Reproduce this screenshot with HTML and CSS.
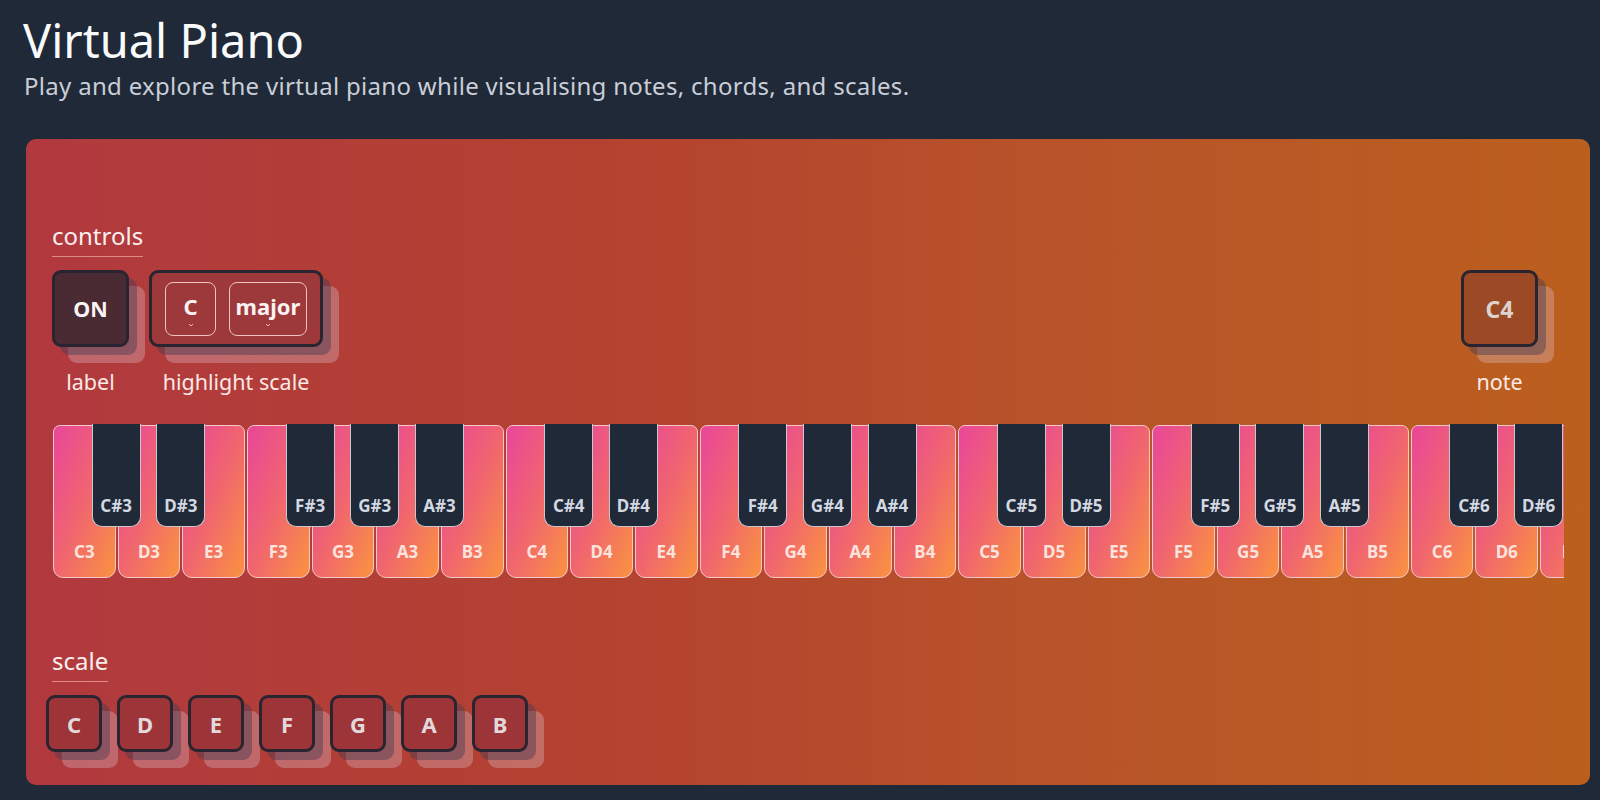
FILE: index.html
```html
<!DOCTYPE html>
<html lang="en">
<head>
<meta charset="utf-8">
<title>Virtual Piano</title>
<link rel="stylesheet" href="styles.css">
</head>
<body>
<header class="page-head">
  <h1 class="title">Virtual Piano</h1>
  <p class="subtitle">Play and explore the virtual piano while visualising notes, chords, and scales.</p>
</header>
<main class="card">
  <section class="controls">
    <h2 class="section-label">controls</h2>
    <div class="controls-row">
      <div class="control-group">
        <div class="control">
          <button class="tile tile-on">ON</button>
          <span class="caption">label</span>
        </div>
        <div class="control">
          <div class="tile tile-group">
            <div class="select select-key">C<svg class="chev" viewBox="0 0 6 4" width="6" height="4"><path d="M1 1 L3 3 L5 1" fill="none" stroke="#f3b7b7" stroke-width="1"/></svg></div>
            <div class="select select-mode">major<svg class="chev" viewBox="0 0 6 4" width="6" height="4"><path d="M1 1 L3 3 L5 1" fill="none" stroke="#f3b7b7" stroke-width="1"/></svg></div>
          </div>
          <span class="caption">highlight scale</span>
        </div>
      </div>
      <div class="control">
        <button class="tile tile-note">C4</button>
        <span class="caption">note</span>
      </div>
    </div>
  </section>

  <div class="piano">
    <div class="white"><span class="wl">C3</span><div class="black"><span>C#3</span></div></div>
    <div class="white"><span class="wl">D3</span><div class="black"><span>D#3</span></div></div>
    <div class="white"><span class="wl">E3</span></div>
    <div class="white"><span class="wl">F3</span><div class="black"><span>F#3</span></div></div>
    <div class="white"><span class="wl">G3</span><div class="black"><span>G#3</span></div></div>
    <div class="white"><span class="wl">A3</span><div class="black"><span>A#3</span></div></div>
    <div class="white"><span class="wl">B3</span></div>
    <div class="white"><span class="wl">C4</span><div class="black"><span>C#4</span></div></div>
    <div class="white"><span class="wl">D4</span><div class="black"><span>D#4</span></div></div>
    <div class="white"><span class="wl">E4</span></div>
    <div class="white"><span class="wl">F4</span><div class="black"><span>F#4</span></div></div>
    <div class="white"><span class="wl">G4</span><div class="black"><span>G#4</span></div></div>
    <div class="white"><span class="wl">A4</span><div class="black"><span>A#4</span></div></div>
    <div class="white"><span class="wl">B4</span></div>
    <div class="white"><span class="wl">C5</span><div class="black"><span>C#5</span></div></div>
    <div class="white"><span class="wl">D5</span><div class="black"><span>D#5</span></div></div>
    <div class="white"><span class="wl">E5</span></div>
    <div class="white"><span class="wl">F5</span><div class="black"><span>F#5</span></div></div>
    <div class="white"><span class="wl">G5</span><div class="black"><span>G#5</span></div></div>
    <div class="white"><span class="wl">A5</span><div class="black"><span>A#5</span></div></div>
    <div class="white"><span class="wl">B5</span></div>
    <div class="white"><span class="wl">C6</span><div class="black"><span>C#6</span></div></div>
    <div class="white"><span class="wl">D6</span><div class="black"><span>D#6</span></div></div>
    <div class="white"><span class="wl">E6</span></div>
  </div>

  <section class="scale">
    <h2 class="section-label">scale</h2>
    <div class="scale-row">
      <button class="tile tile-scale">C</button>
      <button class="tile tile-scale">D</button>
      <button class="tile tile-scale">E</button>
      <button class="tile tile-scale">F</button>
      <button class="tile tile-scale">G</button>
      <button class="tile tile-scale">A</button>
      <button class="tile tile-scale">B</button>
    </div>
  </section>
</main>
</body>
</html>
```
FILE: styles.css
```css
* { box-sizing: border-box; }
html, body { margin: 0; padding: 0; }
body {
  background: #1f2937;
  width: 1600px;
  height: 800px;
  overflow: hidden;
  font-family: "Noto Sans", "Open Sans", sans-serif;
  color: #f3f4f6;
  padding: 0 10px 0 26px;
}
.page-head { padding-top: 10px; }
.title {
  margin: 0;
  font-size: 47px;
  font-weight: 400;
  line-height: 60px;
  margin-left: -3px;
  color: #f9fafb;
}
.subtitle {
  margin: 0;
  font-size: 24px;
  line-height: 32px;
  margin-left: -2px;
  color: #c9ced8;
  letter-spacing: 0.3px;
}
.card {
  margin-top: 37px;
  height: 646px;
  border-radius: 10px;
  background: linear-gradient(90deg, #b1393f 0%, #b4432f 40%, #b8532a 65%, #bb5f1e 100%);
  padding: 83px 26px 0 26px;
}
.section-label {
  display: inline-block;
  margin: 0;
  font-size: 24px;
  font-weight: 400;
  line-height: 28px;
  padding-bottom: 6px;
  border-bottom: 1px solid rgba(255, 205, 200, 0.55);
  color: #fbeeee;
}
.controls-row {
  display: flex;
  justify-content: space-between;
  margin-top: 13px;
  padding-right: 26px;
}
.control-group { display: flex; gap: 20px; }
.control {
  display: flex;
  flex-direction: column;
  align-items: center;
}
.caption {
  margin-top: 22px;
  font-size: 21.5px;
  line-height: 26px;
  color: #fbe9e6;
}
.tile {
  font-family: inherit;
  border: 3px solid #2a2430;
  border-radius: 9px;
  font-weight: 700;
  color: #f4eeee;
  display: flex;
  align-items: center;
  justify-content: center;
  padding: 0;
  box-shadow: 8px 8px 0 rgba(70, 60, 80, 0.45), 16px 16px 0 rgba(225, 200, 210, 0.32);
}
.tile-on {
  width: 77px;
  height: 77px;
  background: #4a2a33;
  font-size: 21.5px;
  color: #fbf4f4;
}
.tile-group {
  height: 77px;
  padding: 0 13px;
  gap: 13px;
  background: #9d393b;
}
.select {
  position: relative;
  height: 54px;
  border: 1.5px solid #f2c2c2;
  border-radius: 8px;
  display: flex;
  align-items: center;
  justify-content: center;
  font-size: 22px;
  font-weight: 700;
  color: #fbf2f2;
  padding-bottom: 6px;
}
.select-key { width: 51px; }
.select-mode { width: 78px; }
.chev {
  position: absolute;
  left: 50%;
  bottom: 8px;
  margin-left: -3px;
}
.tile-note {
  width: 77px;
  height: 77px;
  background: #9b4a25;
  font-size: 23px;
  color: #ddd3ce;
}
.piano {
  display: flex;
  margin-top: 29px;
  height: 155px;
  overflow: hidden;
  position: relative;
}
.white {
  position: relative;
  flex: 0 0 62.67px;
  margin: 1px 1px 0 1px;
  height: 153px;
  border: 1.5px solid #f6c6cd;
  border-radius: 7px 7px 10px 10px;
  background: linear-gradient(to bottom right, #e9469a 0%, #f0656f 50%, #fa9340 100%);
  display: flex;
  align-items: flex-end;
  justify-content: center;
  padding-bottom: 15px;
}
.wl {
  font-size: 17px;
  font-weight: 700;
  color: #fde3de;
  line-height: 20px;
}
.black {
  position: absolute;
  z-index: 2;
  top: -2px;
  right: -26px;
  width: 49px;
  height: 103px;
  background: #1f2937;
  border: 1px solid #c9c6cf;
  border-top: none;
  border-radius: 0 0 10px 10px;
  display: flex;
  align-items: flex-end;
  justify-content: center;
  padding-bottom: 10px;
}
.black span {
  font-size: 17px;
  font-weight: 700;
  color: #d3d8e2;
  line-height: 20px;
}
.scale { margin-top: 68px; }
.scale-row {
  display: flex;
  gap: 15px;
  margin-left: -6px;
  margin-top: 13px;
}
.tile-scale {
  width: 56px;
  height: 57px;
  background: #9d3538;
  font-size: 22px;
  color: #e3d9dc;
}
```
